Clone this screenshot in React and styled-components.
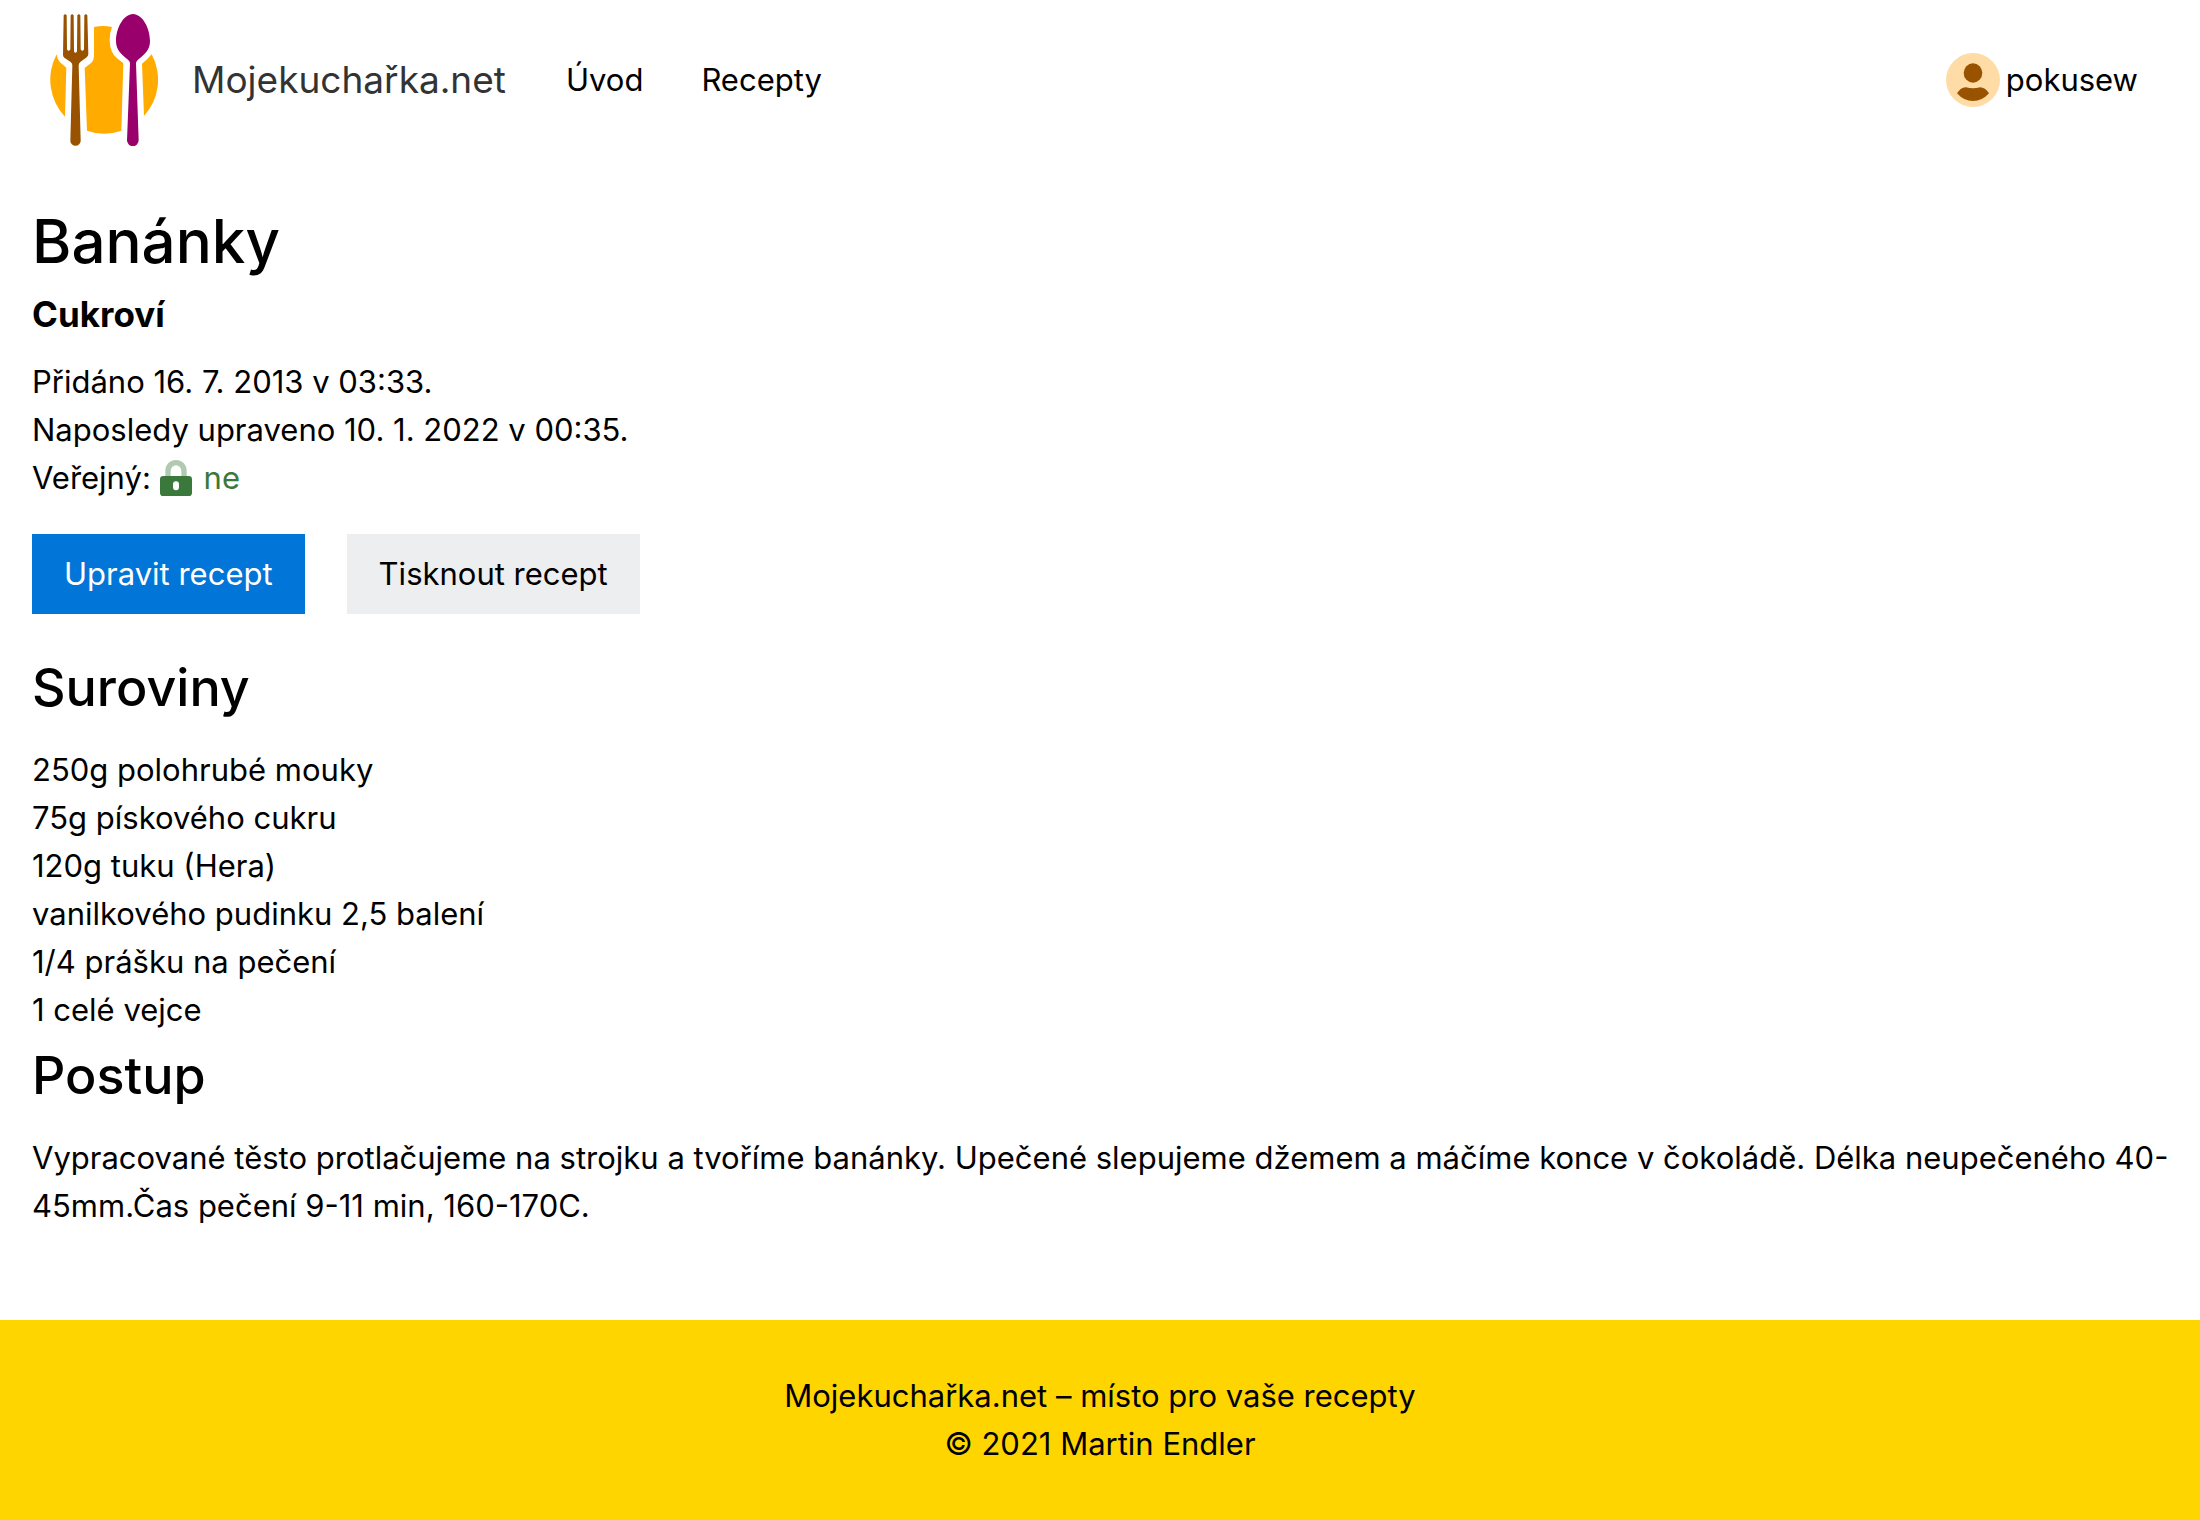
import React from "react";
import styled, { createGlobalStyle } from "styled-components";

const GlobalStyle = createGlobalStyle`
  *, *::before, *::after { box-sizing: border-box; }
  body {
    margin: 0;
    background: #fff;
    color: #000;
    font-family: Inter, "Liberation Sans", sans-serif;
    font-size: 31px;
    line-height: 48px;
  }
`;

const Page = styled.div`
  display: flex;
  flex-direction: column;
  min-height: 100vh;
`;

const Header = styled.header`
  display: flex;
  align-items: center;
  height: 160px;
  padding: 0 62px 0 50px;
`;

const Brand = styled.a`
  display: flex;
  align-items: center;
  gap: 34px;
  color: #333;
  font-size: 37px;
  text-decoration: none;
`;

const Nav = styled.nav`
  display: flex;
  gap: 58px;
  margin-left: 60px;
`;

const NavLink = styled.a`
  color: #000;
  text-decoration: none;
`;

const UserLink = styled(NavLink)`
  display: flex;
  align-items: center;
  gap: 6px;
  margin-left: auto;
`;

const Main = styled.main`
  flex: 1;
  padding: 40px 24px 40px 32px;
`;

const Title = styled.h1`
  margin: 0 0 8px;
  font-size: 60px;
  font-weight: 500;
  line-height: 82px;
`;

const Category = styled.p`
  margin: 0 0 20px;
  font-size: 35px;
  font-weight: 700;
`;

const Text = styled.p`
  margin: 0;
`;

const Visibility = styled.span`
  display: inline-flex;
  align-items: center;
  gap: 12px;
  color: #3b783b;
  vertical-align: top;
`;

const Actions = styled.div`
  display: flex;
  gap: 42px;
  margin: 32px 0 40px;
`;

const Button = styled.button`
  padding: 16px 32px;
  border: 0;
  background: ${(p) => (p.$primary ? "#0275d8" : "#eceeef")};
  color: ${(p) => (p.$primary ? "#fff" : "#000")};
  font: inherit;
  cursor: pointer;
`;

const SectionTitle = styled.h2`
  margin: 8px 0 24px;
  font-size: 52px;
  font-weight: 500;
  line-height: 68px;
`;

const Ingredients = styled.ul`
  margin: 0;
  padding: 0;
  list-style: none;
`;

const Footer = styled.footer`
  padding: 52px 32px;
  background: #ffd500;
  text-align: center;
`;

const Logo = () => (
  <svg width="108" height="132" viewBox="60 42 324 396" aria-hidden="true">
    <g fill="#ffab00">
      <path d="M80 163Q81 178 90 187L109 203L105 350A161 161 0 0 1 80 163Z" />
      <path d="M365 163A161 161 0 0 1 342 348L336 191Q354 177 365 163Z" />
      <path d="M192 81Q219 75 246 81Q239 98 239 119Q239 156 261 175L280 190L274 392Q222 411 171 392L164 204L184 188Q192 181 192 168Z" />
    </g>
    <path
      fill="#995200"
      d="M101 46Q105 39 110 46L111 148Q116 157 121 148L122 46Q126 39 131 46L132 154Q136 163 141 154L142 46Q147 39 151 46L152 148Q157 157 162 148L163 46Q168 39 172 46L175 162Q175 168 170 172L151 186Q146 190 146 196L152 422A15 15 0 0 1 121 422L127 196Q127 190 122 186L103 173Q99 170 99 164Z"
    />
    <path
      fill="#99006b"
      d="M309 42C337 42 360 84 360 123C360 150 344 163 324 179Q318 184 318 190L326 421A17 17 0 0 1 291 421L300 190Q300 184 294 179C274 163 258 150 258 123C258 84 281 42 309 42Z"
    />
  </svg>
);

const Avatar = () => (
  <svg width="54" height="54" viewBox="0 0 162 162" aria-hidden="true">
    <circle cx="81" cy="81" r="81" fill="#ffdca6" />
    <g fill="#995200">
      <ellipse cx="81" cy="60" rx="28" ry="29" />
      <path d="M33 121Q45 102 60 103Q81 109 102 103Q118 103 129 121Q109 144 81 144Q53 144 33 121Z" />
    </g>
  </svg>
);

const Lock = () => (
  <svg width="32" height="36" viewBox="0 0 96 108" aria-hidden="true">
    <path d="M24 50V32a24 24 0 0 1 48 0v18" fill="none" stroke="#b1c9b1" strokeWidth="16" />
    <path
      fill="#3b783b"
      fillRule="evenodd"
      d="M10 48H86Q96 48 96 58V98Q96 108 86 108H10Q0 108 0 98V58Q0 48 10 48ZM48 64Q39 64 39 74V82Q39 91 48 91T57 82V74Q57 64 48 64Z"
    />
  </svg>
);

const ingredients = [
  "250g polohrubé mouky",
  "75g pískového cukru",
  "120g tuku (Hera)",
  "vanilkového pudinku 2,5 balení",
  "1/4 prášku na pečení",
  "1 celé vejce",
];

export default function App() {
  return (
    <Page>
      <GlobalStyle />
      <Header>
        <Brand href="#">
          <Logo />
          Mojekuchařka.net
        </Brand>
        <Nav>
          <NavLink href="#">Úvod</NavLink>
          <NavLink href="#">Recepty</NavLink>
        </Nav>
        <UserLink href="#">
          <Avatar />
          pokusew
        </UserLink>
      </Header>
      <Main>
        <Title>Banánky</Title>
        <Category>Cukroví</Category>
        <Text>Přidáno 16. 7. 2013 v 03:33.</Text>
        <Text>Naposledy upraveno 10. 1. 2022 v 00:35.</Text>
        <Text>
          Veřejný:{" "}
          <Visibility>
            <Lock />
            ne
          </Visibility>
        </Text>
        <Actions>
          <Button type="button" $primary>Upravit recept</Button>
          <Button type="button">Tisknout recept</Button>
        </Actions>
        <SectionTitle>Suroviny</SectionTitle>
        <Ingredients>
          {ingredients.map((item) => (
            <li key={item}>{item}</li>
          ))}
        </Ingredients>
        <SectionTitle>Postup</SectionTitle>
        <Text>
          Vypracované těsto protlačujeme na strojku a tvoříme banánky. Upečené slepujeme džemem a
          máčíme konce v čokoládě. Délka neupečeného 40-45mm.Čas pečení 9-11 min, 160-170C.
        </Text>
      </Main>
      <Footer>
        <Text>Mojekuchařka.net – místo pro vaše recepty</Text>
        <Text>© 2021 Martin Endler</Text>
      </Footer>
    </Page>
  );
}
